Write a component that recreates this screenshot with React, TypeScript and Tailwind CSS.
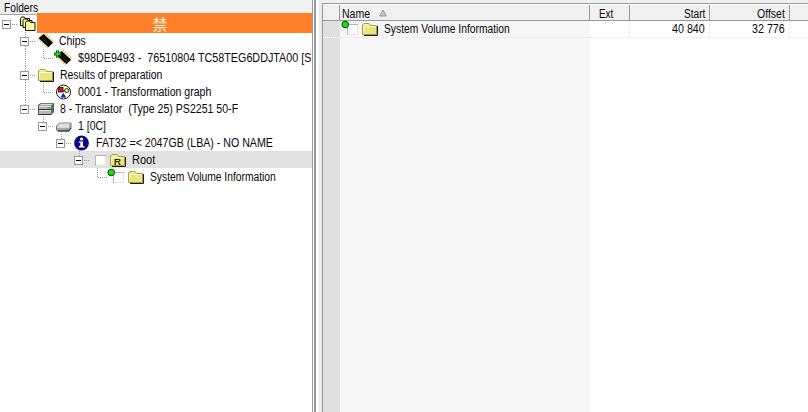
import React, { useLayoutEffect, useRef, useState } from "react";

/** Single-line label squeezed horizontally to a given width. */
function Label({ text, w, className = "" }: { text: string; w: number; className?: string }) {
  const ref = useRef<HTMLSpanElement>(null);
  const [scale, setScale] = useState(0.86);
  useLayoutEffect(() => {
    if (ref.current) setScale(w / ref.current.offsetWidth);
  }, [w, text]);
  return (
    <span className={`block h-[17px] shrink-0 text-[12px] leading-[19px] ${className}`} style={{ width: w }}>
      <span
        ref={ref}
        className="inline-block origin-left whitespace-pre align-top text-[#080808]"
        style={{ transform: `scaleX(${scale})` }}
      >
        {text}
      </span>
    </span>
  );
}

type CellKind = "toggle" | "line" | "corner" | "blank" | "first" | "last";

function Cell({ kind }: { kind: CellKind }) {
  const hasBox = kind === "toggle" || kind === "first" || kind === "last";
  const down = kind === "toggle" || kind === "line";
  const up = kind !== "blank" && kind !== "first";
  return (
    <svg width="18" height="17" viewBox="0 0 18 17" className="shrink-0" shapeRendering="crispEdges">
      <g stroke="#999" strokeDasharray="1 1" fill="none">
        {up && <path d="M7.5 0V9" />}
        {down && <path d="M7.5 10V17" />}
        {kind !== "blank" && kind !== "line" && <path d="M8 9.5H17" />}
      </g>
      {hasBox && (
        <>
          <rect x="2.5" y="5.5" width="8" height="8" fill="#fff" stroke="#999" />
          <path d="M4 9.5h5" stroke="#000" />
        </>
      )}
    </svg>
  );
}

function Folder({ letter }: { letter?: string }) {
  return (
    <svg width="18" height="17" viewBox="0 0 18 17" className="shrink-0">
      <path d="M2 15.5h13.5V6" stroke="#1a1a1a" fill="none" />
      <path d="M.5 14.5V5L2 3.5h5l1.5 2h6v9z" fill="#e9e67c" stroke="#a09c4c" />
      <path d="M1.5 6.5h12M1.5 6v7.5M2.5 4.5h4" stroke="#fffcc8" fill="none" />
      {letter && (
        <text x="4" y="13.5" fontSize="9.5" fill="#000" stroke="#000" strokeWidth=".2">
          {letter}
        </text>
      )}
    </svg>
  );
}

function Folders() {
  return (
    <svg width="18" height="17" viewBox="0 0 18 17" className="shrink-0">
      <g fill="#ffff9a" stroke="#111">
        <path d="M.5 10.5v-7l1-1.5h3l1 1.5h4v7z" />
        <path d="M3 12.5v-7L4 4h3l1 1.5h4v7z" />
        <path d="M5.5 15.5v-8L6.5 6h3l1 1.5h4.5v8z" />
      </g>
    </svg>
  );
}

function Chip({ plus }: { plus?: boolean }) {
  return (
    <svg width="18" height="17" viewBox="0 0 18 17" className="shrink-0 overflow-visible">
      <path d="M6.5 1.8l9 8.6" stroke="#d2c64a" strokeWidth="3.6" strokeDasharray="1.2 1.2" />
      <path d="M.8 6.8l9.2 8.8" stroke="#d2c64a" strokeWidth="3" strokeDasharray="1.2 1.2" />
      <path d="M.6 6L5.6 2l9.4 8.8-4.6 4.4z" fill="#050505" />
      <path d="M4 6l6.5 6" stroke="#4c4c4c" strokeWidth=".7" />
      {plus && (
        <>
          <path d="M-2 5h7M1.5 1.5v7" stroke="#063b06" strokeWidth="3" />
          <path d="M-1.5 5h6M1.5 2v6" stroke="#20e420" strokeWidth="1.5" />
        </>
      )}
    </svg>
  );
}

function Graph() {
  return (
    <svg width="18" height="17" viewBox="0 0 18 17" className="shrink-0">
      <circle cx="7.5" cy="9" r="7" fill="#fff" stroke="#111" />
      <path d="M5 8l5 0" stroke="#111" />
      <rect x="2.5" y="4.5" width="4.5" height="4.5" fill="#e01010" stroke="#111" strokeWidth=".8" />
      <circle cx="10.7" cy="7.5" r="2.1" fill="#ffe52b" stroke="#111" strokeWidth=".8" />
      <path d="M4.3 14.4l3-4.6 3 4.6z" fill="#1722b0" />
    </svg>
  );
}

function Drive() {
  return (
    <svg width="18" height="17" viewBox="0 0 18 17" className="shrink-0">
      <path d="M.5 5l2.5-1.5h12.5v8.5L13 14.5H.5z" fill="#666" stroke="#555" />
      <path d="M1 5.5l2-1.7h12l-2 1.7z" fill="#ddd" />
      <path d="M1 6h12v3H1zM1 10h12v4H1z" fill="#b4b8b4" />
      <path d="M1 6.5h12M1 10.5h12" stroke="#e4e4e4" />
      <path d="M9.5 8h3" stroke="#18e018" strokeWidth="1.6" />
      <path d="M.5 9.5h13M.5 14.5h13" stroke="#333" />
    </svg>
  );
}

function Disk() {
  return (
    <svg width="18" height="17" viewBox="0 0 18 17" className="shrink-0">
      <path d="M.5 9l3-3h11.5v5l-2 3H1.5l-1-1z" fill="#aaa" stroke="#777" />
      <path d="M1.2 9.5l2.6-3h10.7l-2 3z" fill="#dedede" />
      <path d="M1 10h12" stroke="#fff" />
      <path d="M2 14h11l2-3" stroke="#222" fill="none" />
      <path d="M10 12.2h2" stroke="#30b030" />
    </svg>
  );
}

function Info() {
  return (
    <svg width="18" height="17" viewBox="0 0 18 17" className="shrink-0">
      <circle cx="7.5" cy="9" r="7.4" fill="#09097f" />
      <circle cx="7.6" cy="5" r="1.6" fill="#fff" />
      <path d="M5 7.4h4v4.7h1.5v1.5H5v-1.5h1.3V8.8H5z" fill="#fff" />
    </svg>
  );
}

function Check({ dot }: { dot?: boolean }) {
  return (
    <svg width="18" height="17" viewBox="0 0 18 17" className="shrink-0 overflow-visible">
      <rect x="3.5" y="4.5" width="10" height="10" fill="#fff" stroke="#e3e3e3" />
      <path d="M3.5 15V4.5H14" stroke="#b4b4b4" fill="none" />
      {dot && <circle cx="1.2" cy="4.5" r="3.3" fill="#0be80b" stroke="#0b3d0b" />}
    </svg>
  );
}

interface Node {
  cells: CellKind[];
  icon: React.ReactNode;
  text: string;
  w: number;
  pad?: string;
  selected?: boolean;
}

const nodes: Node[] = [
  { cells: ["blank", "toggle"], icon: <Chip />, text: "Chips", w: 27, pad: "ml-[3px]" },
  { cells: ["blank", "line", "corner"], icon: <Chip plus />, text: "$98DE9493 -  76510804 TC58TEG6DDJTA00 [S", w: 233 },
  { cells: ["blank", "toggle"], icon: <Folder />, text: "Results of preparation", w: 102 },
  { cells: ["blank", "line", "corner"], icon: <Graph />, text: "0001 - Transformation graph", w: 133 },
  { cells: ["blank", "last"], icon: <Drive />, text: "8 - Translator  (Type 25) PS2251 50-F", w: 178 },
  { cells: ["blank", "blank", "last"], icon: <Disk />, text: "1 [0C]", w: 28 },
  { cells: ["blank", "blank", "blank", "last"], icon: <Info />, text: "FAT32 =< 2047GB (LBA) - NO NAME", w: 177 },
  {
    cells: ["blank", "blank", "blank", "blank", "last"],
    icon: (
      <>
        <Check />
        <Folder letter="R" />
      </>
    ),
    text: "Root",
    w: 23,
    selected: true,
  },
  {
    cells: ["blank", "blank", "blank", "blank", "blank", "corner"],
    icon: (
      <>
        <Check dot />
        <Folder />
      </>
    ),
    text: "System Volume Information",
    w: 126,
  },
];

function FolderTree() {
  return (
    <section className="flex w-[312px] shrink-0 flex-col overflow-hidden bg-white">
      <header className="h-[15px] border-b border-[#a8a8a8] bg-[#f0f0f0] pl-1">
        <Label text="Folders" w={34} className="-mt-px" />
      </header>
      <div className="flex h-[17px]">
        <Cell kind="first" />
        <span className="w-[2px]" />
        <Folders />
        <div className="-mt-[2px] ml-[-1px] flex h-5 w-[275px] items-center justify-center bg-[#ff8028] pr-[29px] text-[15px] leading-none text-[#fff4df] [font-family:'Noto_Sans_CJK_SC',sans-serif]">
          禁
        </div>
      </div>
      {nodes.map((n) => (
        <div key={n.text} className={`flex h-[17px] shrink-0 ${n.selected ? "bg-[#e2e2e2]" : ""}`}>
          {n.cells.map((c, i) => (
            <Cell key={i} kind={c} />
          ))}
          <span className="w-[2px] shrink-0" />
          {n.icon}
          <Label text={n.text} w={n.w} className={n.pad ?? "ml-1"} />
        </div>
      ))}
    </section>
  );
}

function Splitter() {
  return (
    <div className="flex w-[10px] shrink-0">
      <i className="w-px bg-[#999]" />
      <i className="w-px bg-white" />
      <i className="w-[2px] bg-[#999]" />
      <i className="w-[3px] bg-white" />
      <i className="w-[3px] bg-[#ebebeb]" />
    </div>
  );
}

const head = "h-full shrink-0 border-r border-[#999] flex items-center";

function FileList() {
  return (
    <section className="flex min-w-0 flex-1 flex-col">
      <div className="h-[3px] shrink-0 bg-[#f0f0f0]" />
      <div className="flex min-h-0 flex-1 flex-col border-l border-t border-[#999]">
        <div className="flex h-[17px] shrink-0 border-b border-t border-b-[#999] border-t-white bg-[#f0f0f0]">
          <div className={`${head} w-[17px]`} />
          <div className={`${head} w-[250px] pl-[2px]`}>
            <Label text="Name" w={28} className="mt-px" />
            <svg width="8" height="8" viewBox="0 0 8 8" className="ml-[9px]">
              <path d="M4 1L7.3 7H.7z" fill="#c4c4c4" stroke="#999" />
            </svg>
          </div>
          <div className={`${head} w-[40px] pl-[9px]`}>
            <Label text="Ext" w={14} className="mt-px" />
          </div>
          <div className={`${head} w-[80px] justify-end pr-1`}>
            <Label text="Start" w={21} className="mt-px" />
          </div>
          <div className={`${head} w-[80px] justify-end pr-1`}>
            <Label text="Offset" w={28} className="mt-px" />
          </div>
        </div>
        <div className="flex min-h-0 flex-1">
          <div className="w-[17px] shrink-0 bg-[#e0e0e0]">
            <div className="h-[17px] border-b border-dotted border-white" />
          </div>
          <div className="w-[250px] shrink-0 bg-[#f6f6f6]">
            <div className="flex h-[17px] border-b border-dotted border-[#e4e4e4] pl-1">
              <div className="-mt-px flex">
                <Check dot />
                <Folder />
                <Label text="System Volume Information" w={126} className="ml-1" />
              </div>
            </div>
          </div>
          <div className="min-w-0 flex-1 bg-white">
            <div className="flex h-[17px] border-b border-dotted border-[#e4e4e4]">
              <div className="w-[40px] border-r border-dotted border-[#e4e4e4]" />
              <div className="flex w-[80px] justify-end border-r border-dotted border-[#e4e4e4] pr-1">
                <Label text="40 840" w={33} className="-mt-px" />
              </div>
              <div className="flex w-[80px] justify-end border-r border-dotted border-[#e4e4e4] pr-1">
                <Label text="32 776" w={33} className="-mt-px" />
              </div>
            </div>
          </div>
        </div>
      </div>
    </section>
  );
}

export default function App() {
  return (
    <main className="flex h-[412px] w-[808px] overflow-hidden bg-white [font-family:'Liberation_Sans',Arial,sans-serif]">
      <FolderTree />
      <Splitter />
      <FileList />
    </main>
  );
}
